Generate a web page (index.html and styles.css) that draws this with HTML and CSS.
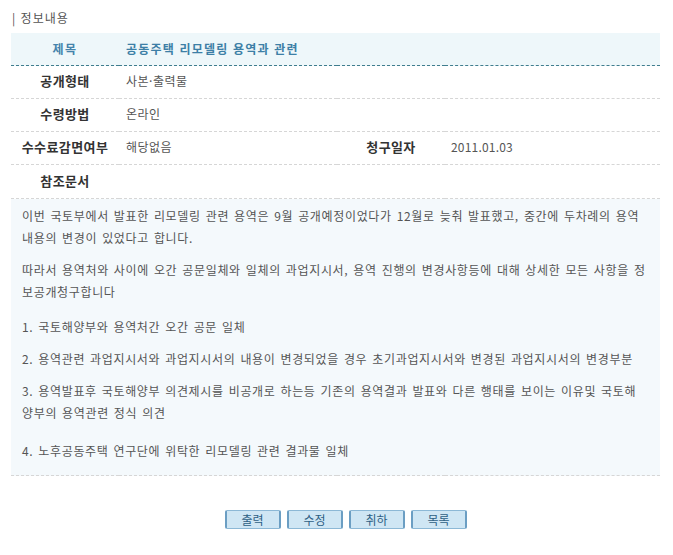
FILE: index.html
```html
<!DOCTYPE html>
<html lang="ko">
<head>
<meta charset="utf-8">
<link rel="stylesheet" href="styles.css">
</head>
<body>
<div class="page">
  <div class="title">| 정보내용</div>
  <table class="info">
    <colgroup>
      <col class="c-label"><col class="c-val1"><col class="c-label"><col>
    </colgroup>
    <tr class="head">
      <th>제목</th>
      <td colspan="3" class="subject">공동주택 리모델링 용역과 관련</td>
    </tr>
    <tr>
      <th>공개형태</th>
      <td colspan="3">사본·출력물</td>
    </tr>
    <tr>
      <th>수령방법</th>
      <td colspan="3">온라인</td>
    </tr>
    <tr>
      <th>수수료감면여부</th>
      <td>해당없음</td>
      <th>청구일자</th>
      <td class="date">2011.01.03</td>
    </tr>
    <tr class="ref-row">
      <th>참조문서</th>
      <td colspan="3"></td>
    </tr>
    <tr class="content-row">
      <td colspan="4" class="content">
        <p><span>이번 국토부에서 발표한 리모델링 관련 용역은 9월 공개예정이었다가 12월로 늦춰 발표했고, 중간에 두차례의 용역</span><br><span>내용의 변경이 있었다고 합니다.</span></p>
        <p><span>따라서 용역처와 사이에 오간 공문일체와 일체의 과업지시서, 용역 진행의 변경사항등에 대해 상세한 모든 사항을 정</span><br><span>보공개청구합니다</span></p>
        <p class="gap-l"><span>1. 국토해양부와 용역처간 오간 공문 일체</span></p>
        <p><span>2. 용역관련 과업지시서와 과업지시서의 내용이 변경되었을 경우 초기과업지시서와 변경된 과업지시서의 변경부분</span></p>
        <p><span>3. 용역발표후 국토해양부 의견제시를 비공개로 하는등 기존의 용역결과 발표와 다른 행태를 보이는 이유및 국토해</span><br><span>양부의 용역관련 정식 의견</span></p>
        <p class="gap-xl"><span>4. 노후공동주택 연구단에 위탁한 리모델링 관련 결과물 일체</span></p>
      </td>
    </tr>
  </table>
  <div class="buttons">
    <button class="btn">출력</button>
    <button class="btn">수정</button>
    <button class="btn">취하</button>
    <button class="btn">목록</button>
  </div>
</div>
</body>
</html>
```

FILE: styles.css
```css
html, body {
  margin: 0;
  padding: 0;
  background: #ffffff;
}
body {
  font-family: "Noto Sans CJK KR", "Noto Sans", sans-serif;
  font-size: 12px;
  color: #444;
}
.page {
  padding: 10px 13px 0 11px;
}
.title {
  height: 23px;
  line-height: 15px;
  padding-left: 1px;
  color: #555;
  font-size: 12px;
  letter-spacing: 1px;
}
.info {
  width: 649px;
  border-collapse: collapse;
  table-layout: fixed;
}
.c-label { width: 108px; }
.c-val1 { width: 218px; }
.info th, .info td {
  height: 30px;
  padding: 0 0 2px 0;
  line-height: 16px;
  border-bottom: 1px dashed #d6d6d6;
  vertical-align: middle;
}
.info th {
  text-align: center;
  font-weight: bold;
  color: #333;
  font-size: 13px;
  letter-spacing: 0.4px;
}
.info td {
  padding-left: 7px;
  color: #555;
  white-space: nowrap;
  letter-spacing: 0.5px;
}
.info td.date {
  padding-left: 6px;
  letter-spacing: 0.2px;
}
.head th, .head td {
  height: 31px;
  padding-bottom: 1px;
  background: #eef7fa;
  border-bottom: 1px dashed #3f7d8e;
}
.head th {
  color: #4583ab;
  font-size: 12px;
  letter-spacing: 1.5px;
}
.head td.subject {
  color: #3d7fa6;
  font-weight: bold;
  letter-spacing: 1.2px;
}
.ref-row th, .ref-row td { height: 31px; }
.info td.content {
  background: #f4f9fc;
  padding: 6px 11px 13px 11px;
  height: auto;
  color: #555;
  line-height: 22px;
  letter-spacing: 0.65px;
  word-spacing: 1px;
}
.content p {
  margin: 10px 0 0 0;
}
.content p:first-child { margin-top: 0; }
.content p.gap-l { margin-top: 13px; }
.content p.gap-xl { margin-top: 16px; }
.content span { white-space: nowrap; }
.buttons {
  display: flex;
  justify-content: center;
  gap: 6px;
  padding: 34px 0 0 20px;
}
.btn {
  width: 56px;
  height: 19px;
  padding: 0;
  margin: 0;
  background: #cfe6f4;
  border: 1px solid #8cb8d6;
  border-left: 2px solid #6b9ec3;
  border-right: 2px solid #6b9ec3;
  border-radius: 2px;
  font-family: "Noto Sans CJK KR", sans-serif;
  font-size: 12px;
  line-height: 16px;
  color: #2e5f84;
}
```
